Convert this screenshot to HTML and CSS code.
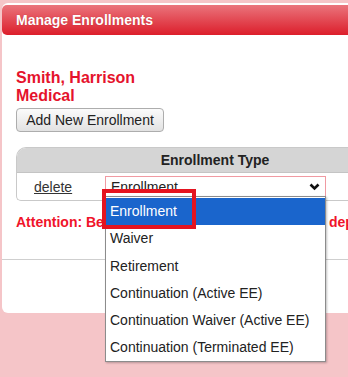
FILE: index.html
```html
<!DOCTYPE html>
<html lang="en">
<head>
    <meta charset="UTF-8">
    <meta name="viewport" content="width=device-width, initial-scale=1.0">
    <title>Manage Enrollments</title>
    <link rel="stylesheet" href="styles.css">
</head>
<body>

    <div class="panel">
        <div class="panel-head">Manage Enrollments</div>

        <div class="panel-body">
            <div class="member">Smith, Harrison<br>Medical</div>
            <button class="btn">Add New Enrollment</button>

            <div class="enroll">
                <div class="enroll-head">
                    <div></div>
                    <div class="th">Enrollment Type</div>
                    <div></div>
                </div>
                <div class="enroll-row">
                    <div class="cell-del"><a href="#">delete</a></div>
                    <div class="cell-type">
                        <div class="fake-select">
                            <span>Enrollment</span>
                            <svg width="11" height="8" viewBox="0 0 11 8"><path d="M1.5 1.5 L5.5 5.5 L9.5 1.5" fill="none" stroke="#111" stroke-width="2.6"/></svg>
                        </div>
                    </div>
                    <div></div>
                </div>
            </div>

            <p class="attention">Attention: Be<span class="gap"></span>dep</p>
        </div>

        <div class="panel-foot"></div>
    </div>

    <!-- open dropdown of the enrollment type select -->
    <ul class="dropdown">
        <li class="selected">Enrollment</li>
        <li>Waiver</li>
        <li>Retirement</li>
        <li>Continuation (Active EE)</li>
        <li>Continuation Waiver (Active EE)</li>
        <li>Continuation (Terminated EE)</li>
    </ul>
    <div class="mark"></div>

</body>
</html>
```

FILE: styles.css
```css
body {
    font-family: 'Liberation Sans', Arial, sans-serif;
    margin: 0;
    padding: 0;
    background-color: #f5c5c8;
    overflow: hidden;
    position: relative;
    height: 377px;
}
.panel {
    margin: 3px 0 0 2px;
    padding-top: 2px;
    background: white;
    border-radius: 6px 0 0 6px;
}
.panel-head {
    height: 30px;
    line-height: 30px;
    padding-left: 14px;
    border-radius: 5px 0 0 5px;
    background: linear-gradient(#ea747c, #dc1e2b);
    color: white;
    font-weight: bold;
    font-size: 14px;
    text-shadow: 0 0 1px rgba(120, 0, 0, 0.4);
}
.panel-body {
    padding: 33px 0 0 14px;
}
.member {
    color: #e5132c;
    font-weight: bold;
    font-size: 16px;
    line-height: 18px;
    padding-top: 1px;
}
.btn {
    display: block;
    margin-top: 3px;
    height: 24px;
    width: 148px;
    padding: 0;
    font-family: inherit;
    font-size: 14px;
    color: #222;
    background: linear-gradient(#fbfbfb, #e2e2e2);
    border: 1px solid #adadad;
    border-radius: 4px;
}
.enroll {
    margin-top: 15px;
    border: 1px solid #c9c9c9;
    border-right: none;
    border-radius: 10px 0 0 5px;
    overflow: hidden;
    font-size: 14px;
}
.enroll-head,
.enroll-row {
    display: grid;
    grid-template-columns: 83px 230px 1fr;
}
.enroll-head {
    height: 24px;
    line-height: 24px;
    background: #d5d5d5;
    border-bottom: 1px solid #c4c4c4;
}
.th {
    text-align: center;
    font-weight: bold;
    color: #222;
}
.enroll-row {
    height: 27px;
    align-items: center;
}
.cell-del {
    padding-left: 17px;
}
.cell-del a {
    color: #333;
}
.cell-type {
    padding-left: 5px;
}
.fake-select {
    display: flex;
    justify-content: space-between;
    align-items: center;
    box-sizing: border-box;
    width: 221px;
    height: 21px;
    padding: 0 5px;
    border: 1px solid #f09aa2;
    color: #222;
}
.attention {
    margin: 13px 0 0 0;
    line-height: 16px;
    font-size: 14px;
    font-weight: bold;
    color: #f0142a;
    white-space: nowrap;
}
.gap {
    display: inline-block;
    width: 225px;
}
.panel-foot {
    margin-top: 29px;
    height: 53px;
    border-top: 1px solid #cfcfcf;
    border-radius: 0 0 0 6px;
}
.dropdown {
    position: absolute;
    left: 105px;
    top: 196px;
    width: 221px;
    height: 166px;
    margin: 0;
    padding: 1px 0 0 0;
    list-style: none;
    box-sizing: border-box;
    background: white;
    border: 1px solid #8c8c8c;
    box-shadow: 1px 1px 2px rgba(0, 0, 0, 0.25);
    font-size: 14px;
    color: #222;
}
.dropdown li {
    height: 27.3px;
    line-height: 27.3px;
    padding-left: 4px;
}
.dropdown li.selected {
    background: #1a65cc;
    color: white;
}
.mark {
    position: absolute;
    left: 102px;
    top: 189px;
    width: 86px;
    height: 32px;
    border: 4px solid #e41420;
}
```
